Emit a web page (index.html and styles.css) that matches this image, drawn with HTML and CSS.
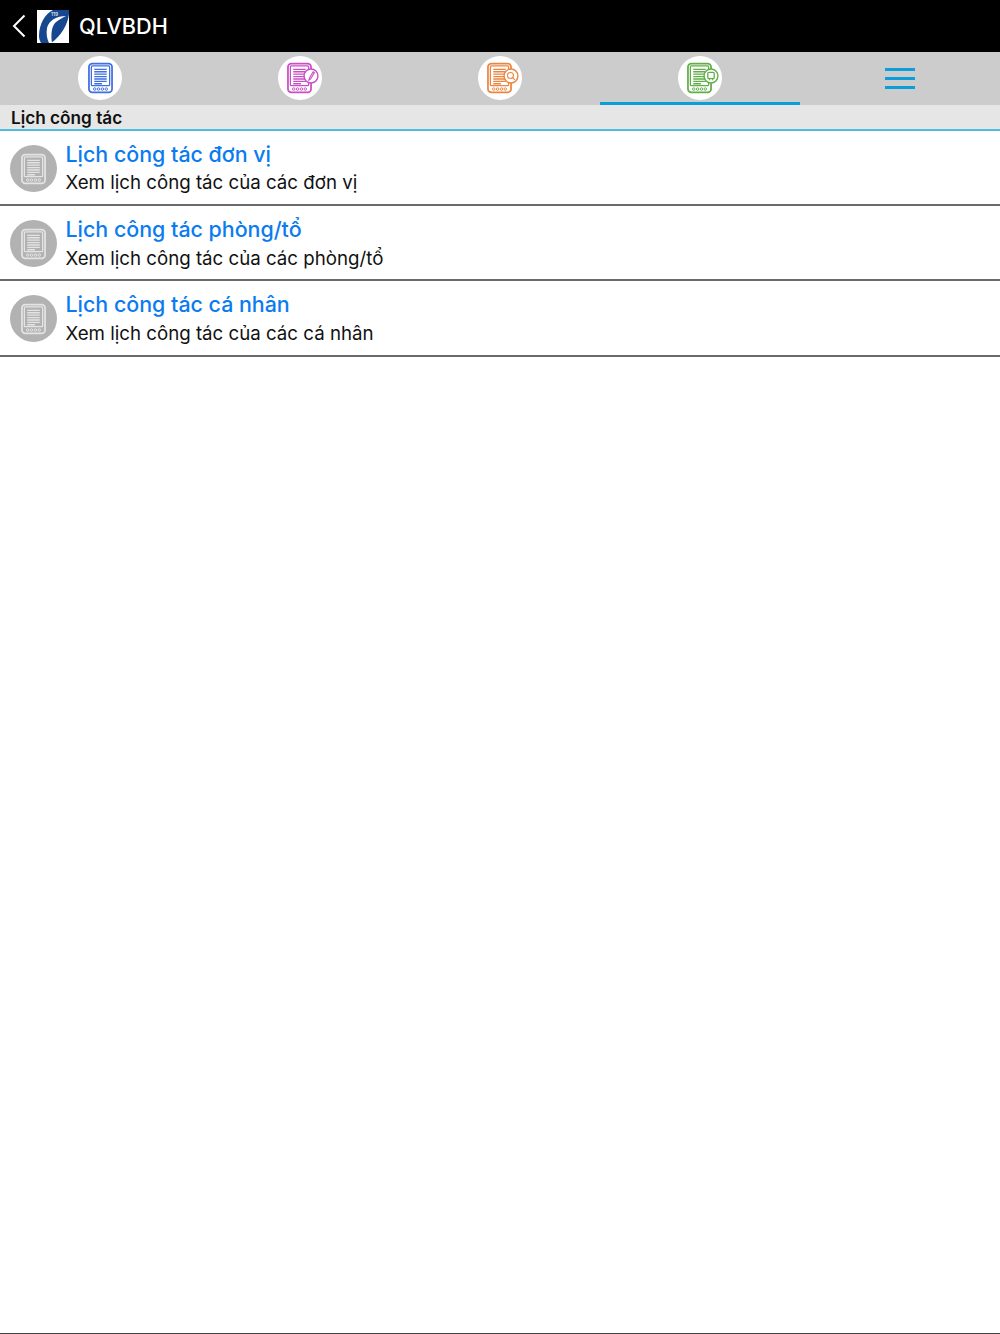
FILE: index.html
```html
<!DOCTYPE html>
<html lang="vi">
<head>
  <meta charset="UTF-8">
  <meta name="viewport" content="width=device-width, initial-scale=1.0">
  <title>QLVBDH</title>
  <link rel="stylesheet" href="styles.css">
</head>
<body>
  <svg class="defs" width="0" height="0">
    <symbol id="tablet" viewBox="0 0 26 32">
      <rect x="1" y="1" width="24" height="30" rx="3.500" fill="none" stroke="currentColor" stroke-width="1.800"/>
      <rect x="3.500" y="3.500" width="19" height="20.500" rx="1" fill="none" stroke="currentColor" stroke-width="1.300"/>
      <path d="M6.500 7h13M6.500 9.500h13M6.500 12h13M6.500 14.500h13M6.500 17h13M6.500 19.500h13M6.500 22h8" fill="none" stroke="currentColor" stroke-width="1.400"/>
      <circle cx="7" cy="27.500" r="1.300" fill="none" stroke="currentColor"/>
      <circle cx="11" cy="27.500" r="1.300" fill="none" stroke="currentColor"/>
      <circle cx="15" cy="27.500" r="1.300" fill="none" stroke="currentColor"/>
      <circle cx="19" cy="27.500" r="1.300" fill="none" stroke="currentColor"/>
    </symbol>
  </svg>

  <header class="topbar">
    <svg class="back" width="14" height="24" viewBox="0 0 14 24"><path d="M12.500 1.500 2 12l10.500 10.500" fill="none" stroke="#fff" stroke-width="2"/></svg>
    <svg class="logo" width="32" height="33" viewBox="0 0 32 33">
      <rect width="32" height="33" fill="#fff"/>
      <path d="M2 26C2 14 8 4 16 0h16v4C31 14 24 26 14 33H4C3 31 2 29 2 26Z" fill="#17478e"/>
      <path d="M29 6C20 6 12 10 10 18c-1 6 0 11 2 15h3c-1-7-1-15 3-20 3-3 7-5 11-7Z" fill="#fff"/>
      <text class="logo-num" x="14" y="5.500">119</text>
    </svg>
    <span class="app-name">QLVBDH</span>
  </header>

  <nav class="tabs">
    <div class="tab">
      <span class="tab-icon blue"><svg width="25" height="32"><use href="#tablet"/></svg></span>
    </div>
    <div class="tab">
      <span class="tab-icon pink">
        <svg width="25" height="32"><use href="#tablet"/></svg>
        <svg class="badge" width="16" height="16" viewBox="0 0 15 15"><circle cx="7.500" cy="7.500" r="6.500" fill="#fff" stroke="currentColor" stroke-width="1.300"/><path d="M9.500 3.500 6 9.500l-.5 2 1.700-1.200 3.500-6Z" fill="none" stroke="currentColor"/></svg>
      </span>
    </div>
    <div class="tab">
      <span class="tab-icon orange">
        <svg width="25" height="32"><use href="#tablet"/></svg>
        <svg class="badge" width="16" height="16" viewBox="0 0 15 15"><circle cx="7.500" cy="7.500" r="6.500" fill="#fff" stroke="currentColor" stroke-width="1.300"/><circle cx="7" cy="7" r="2.800" fill="none" stroke="currentColor"/><path d="m9 9 2.200 2.200" stroke="currentColor"/></svg>
      </span>
    </div>
    <div class="tab active">
      <span class="tab-icon green">
        <svg width="25" height="32"><use href="#tablet"/></svg>
        <svg class="badge" width="16" height="16" viewBox="0 0 15 15"><circle cx="7.500" cy="7.500" r="6.500" fill="#fff" stroke="currentColor" stroke-width="1.300"/><rect x="4.500" y="4" width="6" height="6" rx="1" fill="none" stroke="currentColor" stroke-width="1.200"/><path d="M6 10v1.500M9 10v1.500" stroke="currentColor"/></svg>
      </span>
    </div>
    <div class="tab">
      <span class="menu-btn"><i></i><i></i><i></i></span>
    </div>
  </nav>

  <div class="section-title">Lịch công tác</div>

  <ul class="list">
    <li class="list-item">
      <span class="item-icon"><svg width="25" height="32"><use href="#tablet"/></svg></span>
      <div class="item-text">
        <div class="item-title">Lịch công tác đơn vị</div>
        <div class="item-sub">Xem lịch công tác của các đơn vị</div>
      </div>
    </li>
    <li class="list-item">
      <span class="item-icon"><svg width="25" height="32"><use href="#tablet"/></svg></span>
      <div class="item-text">
        <div class="item-title">Lịch công tác phòng/tổ</div>
        <div class="item-sub">Xem lịch công tác của các phòng/tổ</div>
      </div>
    </li>
    <li class="list-item">
      <span class="item-icon"><svg width="25" height="32"><use href="#tablet"/></svg></span>
      <div class="item-text">
        <div class="item-title">Lịch công tác cá nhân</div>
        <div class="item-sub">Xem lịch công tác của các cá nhân</div>
      </div>
    </li>
  </ul>

  <div class="bottom-line"></div>
</body>
</html>
```

FILE: styles.css
```css
html, body {
  margin: 0;
  padding: 0;
  height: 100%;
  overflow: hidden;
}

body {
  display: flex;
  flex-direction: column;
  background: #fff;
  font-family: Inter, "Liberation Sans", sans-serif;
  color: #111;
}

.defs {
  position: absolute;
}

/* Top bar */
.topbar {
  display: flex;
  align-items: center;
  height: 52px;
  padding-left: 12px;
  background: #000;
  color: #fff;
}

.back {
  margin-right: 11px;
}

.logo {
  margin-right: 10px;
}

.logo-num {
  font-size: 5px;
  fill: #fff;
}

.app-name {
  font-size: 21.700px;
  font-weight: 500;
}

/* Tabs */
.tabs {
  display: flex;
  height: 53px;
  background: #ccc;
}

.tab {
  flex: 1;
  display: flex;
  align-items: flex-start;
  justify-content: center;
  padding-top: 4px;
}

.tab.active {
  box-shadow: inset 0 -3px #0b9ed9;
}

.tab-icon {
  position: relative;
  display: flex;
  align-items: center;
  justify-content: center;
  width: 44px;
  height: 44px;
  border-radius: 50%;
  background: #fff;
}

.tab-icon .badge {
  position: absolute;
  top: 12px;
  right: 3px;
}

.pink svg:first-child,
.orange svg:first-child,
.green svg:first-child {
  margin-right: 1px;
}

.blue { color: #3f6fe0; }
.pink { color: #c94fc4; }
.orange { color: #ec8540; }
.green { color: #5fae48; }

.menu-btn {
  display: flex;
  flex-direction: column;
  gap: 6px;
  padding-top: 12px;
}

.menu-btn i {
  display: block;
  width: 30px;
  height: 3px;
  background: #0b9ed9;
}

/* Section title */
.section-title {
  height: 24px;
  line-height: 25px;
  padding-left: 11px;
  background: #e6e6e6;
  border-bottom: 2px solid #4fbde0;
  font-size: 17.200px;
  font-weight: 600;
}

/* List */
.list {
  flex: 1;
  list-style: none;
  margin: 0;
  padding: 0;
}

.list-item {
  display: flex;
  align-items: center;
  box-sizing: border-box;
  height: 75.200px;
  padding: 0 10px;
  border-bottom: 2px solid #6a6a6a;
}

.item-icon {
  flex: none;
  display: flex;
  align-items: center;
  justify-content: center;
  width: 47px;
  height: 47px;
  margin: 2px 8.500px 0 0;
  border-radius: 50%;
  background: #b2b2b2;
  color: #e4e4e4;
}

.item-text {
  padding-top: 2px;
}

.item-title {
  font-size: 21.400px;
  font-weight: 500;
  line-height: 28px;
  color: #0a7cf0;
}

.item-sub {
  margin-top: 1.500px;
  font-size: 18.700px;
  line-height: 28px;
  color: #111;
}

.bottom-line {
  height: 1px;
  background: #444;
}
```
